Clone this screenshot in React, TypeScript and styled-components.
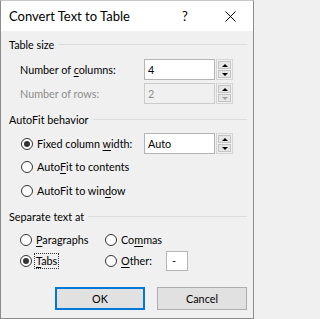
import React from "react";
import styled, { createGlobalStyle } from "styled-components";

const Global = createGlobalStyle`
  html, body { margin: 0; padding: 0; background: #f0f0f0; }
  body { font-family: "Segoe UI", Lato, "Noto Sans", sans-serif; font-size: 10.8px; line-height: 16px; color: #000; }
  * { box-sizing: border-box; }
`;

const Dialog = styled.div`
  width: 254px;
  height: 319px;
  border: 1px solid #8c8c8c;
  border-top-color: #c8c8c8;
  background: #f0f0f0;
  display: flex;
  flex-direction: column;
  overflow: hidden;
`;

const TitleBar = styled.div`
  height: 30px;
  background: #fff;
  display: flex;
  align-items: center;
  padding-left: 8px;
  flex-shrink: 0;
`;

const Title = styled.div`
  flex: 1;
  font-size: 13px;
`;

const TitleButton = styled.div<{ $w: number }>`
  width: ${(p) => p.$w}px;
  height: 30px;
  display: flex;
  align-items: center;
  justify-content: center;
  font-size: 13px;
`;

const Body = styled.div`
  flex: 1;
  padding: 7px 6px 0 8px;
  display: flex;
  flex-direction: column;
`;

const GroupHeader = styled.div<{ $mt?: number }>`
  display: flex;
  align-items: center;
  height: 14px;
  white-space: nowrap;
  margin-top: ${(p) => p.$mt ?? 0}px;
  &::after {
    content: "";
    flex: 1;
    height: 1px;
    background: #dcdcdc;
    margin-left: 4px;
    margin-top: -2px;
  }
`;

const FieldRow = styled.div<{ $mt: number; $disabled?: boolean }>`
  display: grid;
  grid-template-columns: 123px 71px 17px;
  column-gap: 1px;
  align-items: center;
  height: 21px;
  margin-top: ${(p) => p.$mt}px;
  padding-left: 11px;
  white-space: nowrap;
  color: ${(p) => (p.$disabled ? "#8d8d8d" : "#000")};
`;

const RadioFieldRow = styled.div<{ $mt: number }>`
  display: grid;
  grid-template-columns: 134px 71px 17px;
  column-gap: 1px;
  align-items: center;
  height: 21px;
  margin-top: ${(p) => p.$mt}px;
  white-space: nowrap;
`;

const TextBox = styled.div<{ $disabled?: boolean }>`
  height: 21px;
  border: 1px solid ${(p) => (p.$disabled ? "#cccccc" : "#b4b4b4")};
  background: ${(p) => (p.$disabled ? "#f0f0f0" : "#fff")};
  color: ${(p) => (p.$disabled ? "#8d8d8d" : "#000")};
  padding-left: 3px;
  display: flex;
  align-items: center;
`;

const Spinner = styled.div`
  height: 21px;
  display: grid;
  grid-template-rows: 1fr 1fr;
  row-gap: 1px;
  padding: 1px;
  border: 1px solid #d4d4d4;
`;

const SpinHalf = styled.div`
  background: #e6e6e6;
  border: 1px solid #c4c4c4;
  display: flex;
  align-items: center;
  justify-content: center;
`;

const Arrow = styled.span<{ $down?: boolean; $disabled?: boolean }>`
  width: 0;
  height: 0;
  border-left: 3px solid transparent;
  border-right: 3px solid transparent;
  ${(p) =>
    p.$down
      ? `border-top: 3px solid ${p.$disabled ? "#a0a0a0" : "#000"};`
      : `border-bottom: 3px solid ${p.$disabled ? "#a0a0a0" : "#000"};`}
`;

const RadioLine = styled.label<{ $mt?: number; $indent?: number }>`
  display: flex;
  align-items: center;
  height: 16px;
  white-space: nowrap;
  margin-top: ${(p) => p.$mt ?? 0}px;
  padding-left: ${(p) => p.$indent ?? 0}px;
`;

const RadioCircle = styled.span<{ $checked?: boolean }>`
  width: 12px;
  height: 12px;
  border-radius: 50%;
  border: 1px solid #333;
  background: #fff;
  display: flex;
  align-items: center;
  justify-content: center;
  flex-shrink: 0;
  margin-right: 2px;
  &::after {
    content: "";
    display: ${(p) => (p.$checked ? "block" : "none")};
    width: 6px;
    height: 6px;
    border-radius: 50%;
    background: #333;
  }
`;

const Label = styled.span<{ $focus?: boolean }>`
  padding: 0 1px;
  border: 1px dotted ${(p) => (p.$focus ? "#333" : "transparent")};
  line-height: 14px;
`;

const U = styled.span`
  text-decoration: underline;
  text-underline-offset: 2px;
`;

const SepGrid = styled.div`
  display: grid;
  grid-template-columns: 85px 61px 22px;
  grid-template-rows: 16px 20px;
  row-gap: 3px;
  align-items: center;
  margin-top: 8px;
  padding-left: 11px;
`;

const SmallBox = styled.div`
  width: 22px;
  height: 20px;
  border: 1px solid #b4b4b4;
  background: #fff;
  display: flex;
  align-items: center;
  padding-left: 5px;
`;

const ButtonRow = styled.div`
  display: flex;
  gap: 12px;
  margin-top: 16px;
  padding-left: 46px;
`;

const Button = styled.button<{ $default?: boolean }>`
  width: 90px;
  height: 23px;
  font-family: inherit;
  font-size: 10.8px;
  color: #000;
  background: #e1e1e1;
  border: ${(p) => (p.$default ? "2px solid #0078d7" : "1px solid #adadad")};
  padding: 0;
`;

export default function App() {
  return (
    <>
      <Global />
      <Dialog>
        <TitleBar>
          <Title>Convert Text to Table</Title>
          <TitleButton $w={44}>?</TitleButton>
          <TitleButton $w={46}>
            <svg width="11" height="11" viewBox="0 0 11 11">
              <path d="M0.5 0.5 L10.5 10.5 M10.5 0.5 L0.5 10.5" stroke="#000" strokeWidth="1" />
            </svg>
          </TitleButton>
        </TitleBar>
        <Body>
          <GroupHeader>Table size</GroupHeader>
          <FieldRow $mt={7}>
            <span>
              Number of <U>c</U>olumns:
            </span>
            <TextBox>4</TextBox>
            <Spinner>
              <SpinHalf>
                <Arrow />
              </SpinHalf>
              <SpinHalf>
                <Arrow $down />
              </SpinHalf>
            </Spinner>
          </FieldRow>
          <FieldRow $mt={3} $disabled>
            <span>Number of rows:</span>
            <TextBox $disabled>2</TextBox>
            <Spinner>
              <SpinHalf>
                <Arrow />
              </SpinHalf>
              <SpinHalf>
                <Arrow $down $disabled />
              </SpinHalf>
            </Spinner>
          </FieldRow>

          <GroupHeader $mt={9}>AutoFit behavior</GroupHeader>
          <RadioFieldRow $mt={6}>
            <RadioLine $indent={12}>
              <RadioCircle $checked />
              <Label>
                Fixed column <U>w</U>idth:
              </Label>
            </RadioLine>
            <TextBox>Auto</TextBox>
            <Spinner>
              <SpinHalf>
                <Arrow />
              </SpinHalf>
              <SpinHalf>
                <Arrow $down />
              </SpinHalf>
            </Spinner>
          </RadioFieldRow>
          <RadioLine $mt={5} $indent={12}>
            <RadioCircle />
            <Label>
              Auto<U>F</U>it to contents
            </Label>
          </RadioLine>
          <RadioLine $mt={8} $indent={12}>
            <RadioCircle />
            <Label>
              AutoFit to win<U>d</U>ow
            </Label>
          </RadioLine>

          <GroupHeader $mt={11}>Separate text at</GroupHeader>
          <SepGrid>
            <RadioLine>
              <RadioCircle />
              <Label>
                <U>P</U>aragraphs
              </Label>
            </RadioLine>
            <RadioLine>
              <RadioCircle />
              <Label>
                Co<U>m</U>mas
              </Label>
            </RadioLine>
            <span />
            <RadioLine>
              <RadioCircle $checked />
              <Label $focus>
                <U>T</U>abs
              </Label>
            </RadioLine>
            <RadioLine>
              <RadioCircle />
              <Label>
                <U>O</U>ther:
              </Label>
            </RadioLine>
            <SmallBox>-</SmallBox>
          </SepGrid>

          <ButtonRow>
            <Button $default>OK</Button>
            <Button>Cancel</Button>
          </ButtonRow>
        </Body>
      </Dialog>
    </>
  );
}
